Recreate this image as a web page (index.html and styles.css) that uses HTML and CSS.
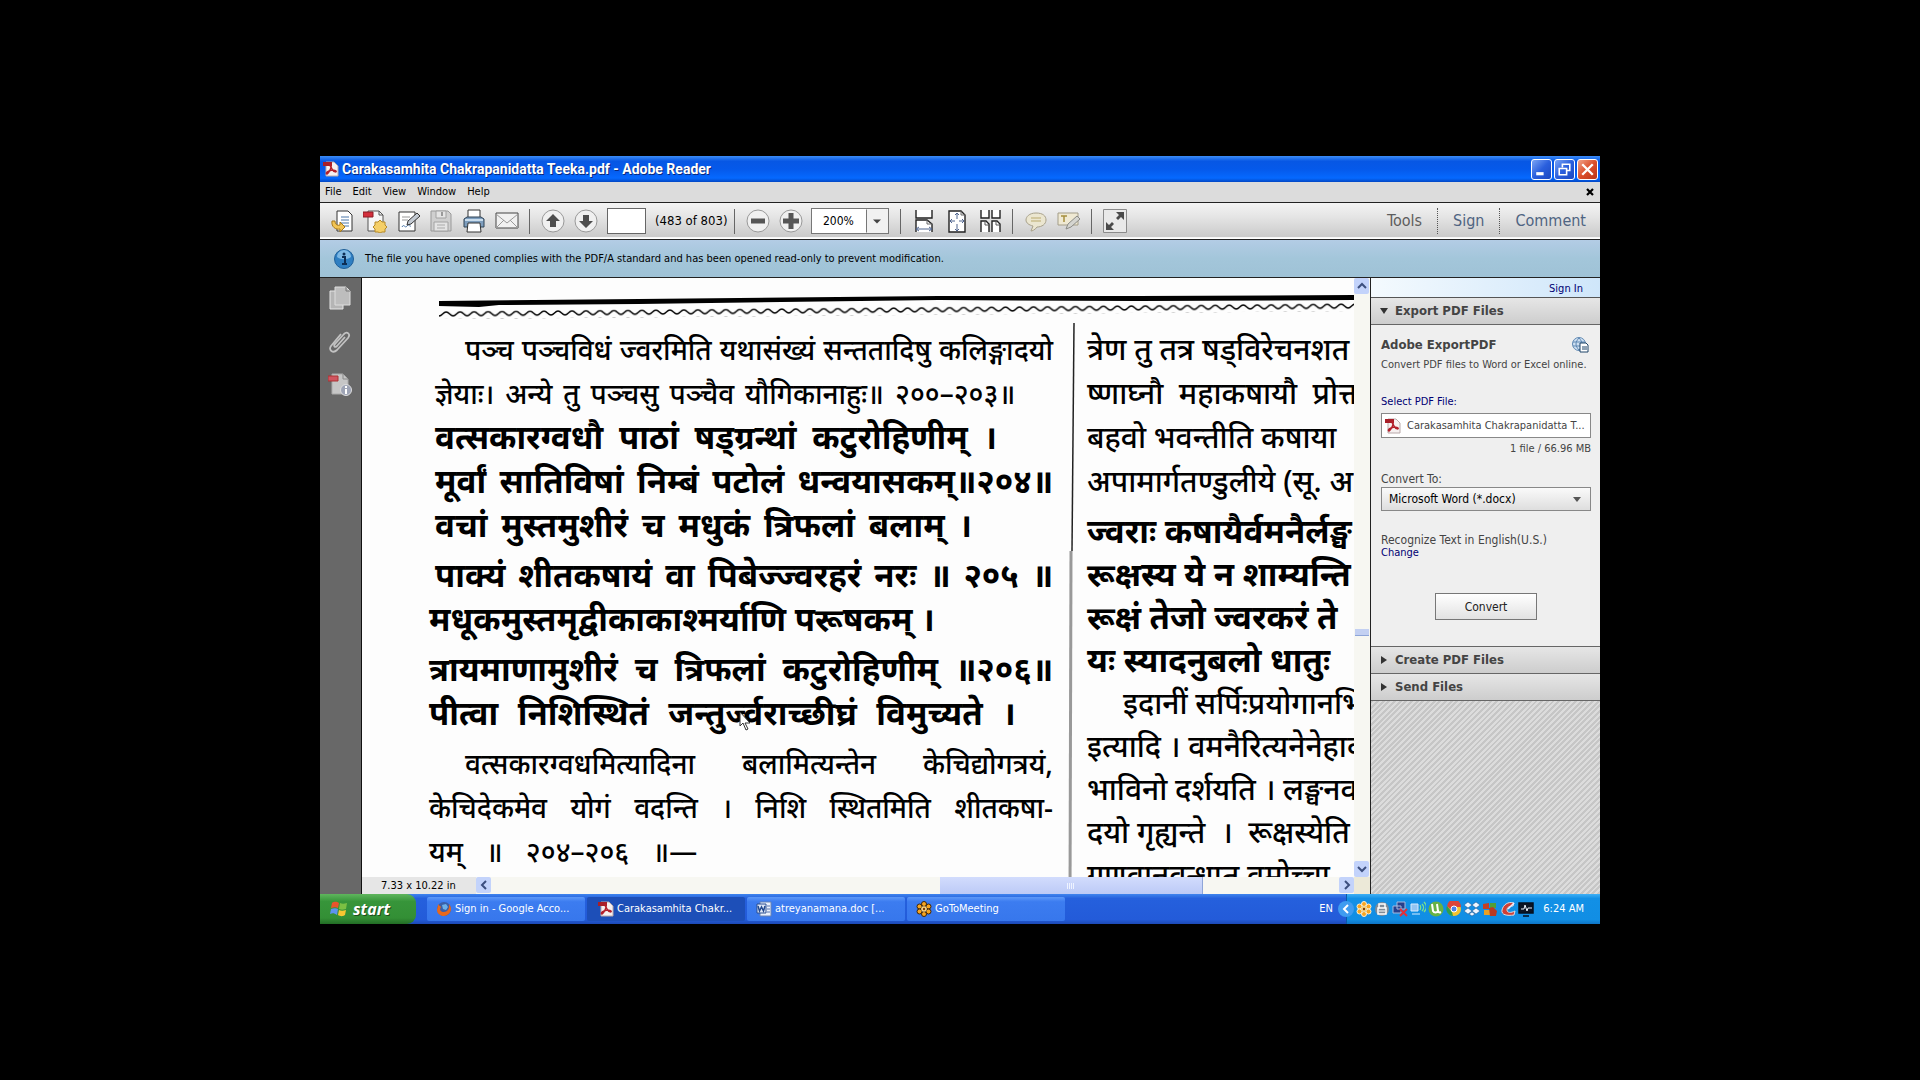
FILE: index.html
```html
<!DOCTYPE html>
<html lang="en">
<head>
<meta charset="utf-8">
<title>Carakasamhita Chakrapanidatta Teeka.pdf - Adobe Reader</title>
<link rel="stylesheet" href="styles.css">
</head>
<body>
<svg class="defs" aria-hidden="true">
  <symbol id="pdf" viewBox="0 0 16 16">
    <path d="M3 1h8l4 4v10H3z" fill="#f6f0f0" stroke="#b9a9aa"/>
    <path d="M0 1h9v4H0z" fill="#a81f29"/>
    <path d="M7 3c2 1 1 4 0 6s-2 4-3 4-1-2 2-3 6-1 7 0-2 2-4-2S6 4 7 3z" fill="none" stroke="#b3202b" stroke-width="1.5"/>
  </symbol>
  <symbol id="flower" viewBox="0 0 16 16">
    <g fill="#f8a51f" stroke="var(--edge)" stroke-width="1">
      <circle cx="8" cy="3" r="2.5"/><circle cx="8" cy="13" r="2.5"/>
      <circle cx="3.5" cy="5.5" r="2.5"/><circle cx="12.5" cy="5.5" r="2.5"/>
      <circle cx="3.5" cy="10.5" r="2.5"/><circle cx="12.5" cy="10.5" r="2.5"/>
    </g>
    <circle cx="8" cy="8" r="2.8" fill="#fbd27c"/><circle cx="8" cy="8" r="1.2" fill="#7a3d08"/>
  </symbol>
</svg>

<div class="screen">
  <header class="titlebar">
    <svg class="i16"><use href="#pdf"/></svg>
    <h1>Carakasamhita Chakrapanidatta Teeka.pdf - Adobe Reader</h1>
    <div class="winbtns">
      <button aria-label="Minimize"><svg viewBox="0 0 18 18"><path d="M4 13h7" stroke="#fff" stroke-width="3"/></svg></button>
      <button aria-label="Restore"><svg viewBox="0 0 18 18"><path d="M7 7V4h7v6h-3" fill="none" stroke="#fff" stroke-width="1.5"/><path d="M4 8h7v6H4z" fill="none" stroke="#fff" stroke-width="1.5"/></svg></button>
      <button class="close" aria-label="Close"><svg viewBox="0 0 18 18"><path d="M4 4l10 10M14 4L4 14" stroke="#fff" stroke-width="2.2"/></svg></button>
    </div>
  </header>

  <nav class="menubar">
    <button>File</button><button>Edit</button><button>View</button><button>Window</button><button>Help</button>
    <button class="docclose" aria-label="Close document"><svg viewBox="0 0 8 8"><path d="M1 1l6 6M7 1L1 7" stroke="#000" stroke-width="2.2"/></svg></button>
  </nav>

  <div class="toolbar">
    <div class="group">
      <button aria-label="Open"><svg viewBox="0 0 24 24"><path d="M7 2h11l4 4v16H7z" fill="#fff" stroke="#333"/><path d="M11 8h8M11 11h8M11 14h8M13 17h6" stroke="#4b76a8"/><path d="M2 12c-1 6 4 9 8 8v3l5-5-5-5v3c-3 1-5-1-5-4z" fill="#f3c555" stroke="#a87918"/></svg></button>
      <button aria-label="Create PDF"><svg viewBox="0 0 24 24"><path d="M5 2h11l4 4v16H5z" fill="#f6f6f6" stroke="#555"/><path d="M16 2v4h4" fill="none" stroke="#555"/><path d="M0 3h10v5H0z" fill="#d32f3c" stroke="#8a1c25"/><path d="M17 11l2 2 3 0 0 3 2 2-2 2 0 3-3 0-2 1-2-1-3 0 0-3-2-2 2-2 0-3 3 0z" fill="#f5cf68" stroke="#b58a28"/></svg></button>
      <button aria-label="Sign document"><svg viewBox="0 0 24 24"><path d="M3 3h16v19H3z" fill="#fff" stroke="#333"/><path d="M6 8h8M6 11h6" stroke="#999"/><path d="M6 18c2-4 3 2 5-1s2 1 4 0" fill="none" stroke="#4b76a8"/><path d="M11 16l1-4 9-8 3 3-9 8z" fill="#c3cad3" stroke="#333"/></svg></button>
      <button aria-label="Save"><svg viewBox="0 0 24 24"><path d="M2 2h17l3 3v17H2z" fill="#cfcfcf" stroke="#999"/><path d="M7 2h10v7H7zM5 13h14v9H5z" fill="#e4e4e4" stroke="#a2a2a2"/><path d="M8 16h8M8 19h8" stroke="#aaa"/><path d="M13 3v4" stroke="#999" stroke-width="2"/></svg></button>
      <button aria-label="Print"><svg viewBox="0 0 24 24"><path d="M6 1h12v9H6z" fill="#fff" stroke="#333"/><path d="M2 10l3-2h14l3 2v8H2z" fill="#7d9dbd" stroke="#2f4254"/><path d="M3 11h18" stroke="#c9dcec" stroke-width="2"/><path d="M6 14h12l1 9H5z" fill="#fff" stroke="#333"/></svg></button>
      <button aria-label="Email"><svg viewBox="0 0 24 24"><path d="M1 4h22v15H1z" fill="#f1f1f1" stroke="#444"/><path d="M1 5l11 9 11-9M1 19l8-8M23 19l-8-8" fill="none" stroke="#999"/></svg></button>
    </div>
    <span class="sep"></span>
    <div class="group">
      <button aria-label="Previous page"><svg viewBox="0 0 24 24"><circle cx="12" cy="12" r="11" fill="#f0f0f0" stroke="#999"/><path d="M12 5l7 7h-4v6H9v-6H5z" fill="#4d4d4d"/></svg></button>
      <button aria-label="Next page"><svg viewBox="0 0 24 24"><circle cx="12" cy="12" r="11" fill="#f0f0f0" stroke="#999"/><path d="M12 19l7-7h-4V6H9v6H5z" fill="#4d4d4d"/></svg></button>
    </div>
    <input class="pageno" type="text" aria-label="Page number">
    <span class="count">(483 of 803)</span>
    <span class="sep"></span>
    <div class="group">
      <button aria-label="Zoom out"><svg viewBox="0 0 24 24"><circle cx="12" cy="12" r="11" fill="#f0f0f0" stroke="#999"/><path d="M5 12h14" stroke="#555" stroke-width="5"/></svg></button>
      <button aria-label="Zoom in"><svg viewBox="0 0 24 24"><circle cx="12" cy="12" r="11" fill="#f0f0f0" stroke="#999"/><path d="M4 12h16M12 4v16" stroke="#555" stroke-width="5"/></svg></button>
    </div>
    <div class="zoom">
      <select aria-label="Zoom level"><option>200%</option></select>
      <svg viewBox="0 0 22 23"><path d="M.5 0v23" stroke="#777"/><path d="M7 10h8l-4 4z" fill="#444"/></svg>
    </div>
    <span class="sep"></span>
    <div class="group">
      <button aria-label="Fit width"><svg viewBox="0 0 24 24"><path d="M4 1v8h16V1M4 23V11h11l5 4v8" fill="#fff" stroke="#222" stroke-width="1.4"/><path d="M15 11v4h5" fill="none" stroke="#666"/><path d="M4 20h16M7 18l-3 2 3 2M17 18l3 2-3 2" fill="none" stroke="#4f648e"/></svg></button>
      <button aria-label="Fit page"><svg viewBox="0 0 24 24"><path d="M4 2h12l4 4v17H4z" fill="#fff" stroke="#222" stroke-width="1.4"/><path d="M16 2v4h4" fill="none" stroke="#666"/><path d="M12 4v6M12 15v7M5 12h5M14 12h5M10 6l2-2 2 2M10 20l2 2 2-2M7 10l-2 2 2 2M17 10l2 2-2 2" fill="none" stroke="#4f648e"/></svg></button>
      <button aria-label="Two pages"><svg viewBox="0 0 24 24"><path d="M3 1v8h8V1M14 1v8h8V1M3 23V12h5l3 3v8M14 23V12h5l3 3v8" fill="#fff" stroke="#222" stroke-width="1.4"/><path d="M7 12v4h4M18 12v4h4" fill="none" stroke="#555"/></svg></button>
    </div>
    <span class="sep"></span>
    <div class="group">
      <button aria-label="Add comment"><svg viewBox="0 0 24 24"><path d="M12 4c7 0 10 3 10 7s-4 7-9 7c-2 3-5 4-6 4l2-5c-4-1-7-3-7-6s3-7 10-7z" fill="#ebe6d0" stroke="#a8a18a"/><path d="M7 9h10M7 12h10" stroke="#b9a96c"/></svg></button>
      <button aria-label="Highlight text"><svg viewBox="0 0 24 24"><path d="M1 4h20v12H1z" fill="#efe9d3" stroke="#a39d88"/><path d="M4 7h6M7 7v6" stroke="#a68f3e" stroke-width="1.5"/><path d="M9 20l2-5 9-8 3 3-9 8z" fill="#d5d5d0" stroke="#8b8b86"/></svg></button>
    </div>
    <span class="sep"></span>
    <div class="group">
      <button aria-label="Read mode"><svg viewBox="0 0 24 24"><path d="M.5.5h23v23H.5z" fill="#e9e9e9" stroke="#8b8b8b"/><path d="M21 3v8l-3-3-3 3-2-2 3-3-3-3zM3 21v-8l3 3 3-3 2 2-3 3 3 3z" fill="#4a4a4a"/></svg></button>
    </div>
    <div class="modes">
      <button class="on">Tools</button><button>Sign</button><button>Comment</button>
    </div>
  </div>

  <div class="notice">
    <svg viewBox="0 0 20 20"><circle cx="10" cy="10" r="9.5" fill="#2f7fc2" stroke="#1f5f99"/><path d="M3 8a7 7 0 0 1 14 0c-4 3-10 3-14 0z" fill="#7db8e4"/><path d="M8 8h3v7M8 15h5" fill="none" stroke="#0d2e55" stroke-width="2"/><circle cx="10" cy="5" r="1.5" fill="#0d2e55"/></svg>
    <p>The file you have opened complies with the PDF/A standard and has been opened read-only to prevent modification.</p>
  </div>

  <main class="work">
    <nav class="rail">
      <button aria-label="Page thumbnails"><svg viewBox="0 0 24 24"><path d="M2 5h13v18H2z" fill="#b5b5b5" stroke="#e6e6e6"/><path d="M7 1h11l4 4v14H7z" fill="#bdbdbd" stroke="#ddd"/><path d="M18 1v4h4" fill="none" stroke="#777"/></svg></button>
      <button aria-label="Attachments"><svg viewBox="0 0 24 24"><path d="M17 8l-8 9c-2 2-4 0-2-2l9-10c3-3 7 0 4 4L9 21c-4 4-9 0-6-4L13 5" fill="none" stroke="#c2c2c2" stroke-width="1.8"/></svg></button>
      <button aria-label="Standards"><svg viewBox="0 0 24 24"><path d="M4 2h11l5 5v15H4z" fill="#c6c6c6" stroke="#aaa"/><path d="M15 2v5h5" fill="none" stroke="#888"/><path d="M0 4h10v5H0z" fill="#cf5560" stroke="#a33"/><circle cx="18" cy="18" r="5.5" fill="#9ea4b5" stroke="#dcdcdc"/><path d="M18 17v5M18 14v2" stroke="#fff" stroke-width="2"/></svg></button>
    </nav>

    <section class="viewer">
      <div class="page" lang="sa">
        <svg class="headrule" viewBox="0 0 916 28" preserveAspectRatio="none" aria-hidden="true">
          <defs><pattern id="wave" width="14" height="8" patternUnits="userSpaceOnUse" patternTransform="rotate(-.5)"><path d="M0 5c3 0 4-4 7-4s4 4 7 4" fill="none" stroke="#000" stroke-width="1.4"/></pattern></defs>
          <path d="M0 6L200 4 500 1 700 1 916 0v5L700 6 500 5 200 9 60 10 40 12 0 11z"/>
          <path d="M0 16L916 8V16L0 24z" fill="url(#wave)"/>
        </svg>
        <div class="cols">
          <div class="col left">
            <p class="indent">पञ्च पञ्चविधं ज्वरमिति यथासंख्यं सन्ततादिषु कलिङ्गादयो</p>
            <p class="w94">ज्ञेयाः। अन्ये तु पञ्चसु पञ्चैव यौगिकानाहुः॥ २००–२०३॥</p>
            <p class="verse w91">वत्सकारग्वधौ पाठां षड्ग्रन्थां कटुरोहिणीम् ।</p>
            <p class="verse">मूर्वां सातिविषां निम्बं पटोलं धन्वयासकम्॥२०४॥</p>
            <p class="verse w87">वचां मुस्तमुशीरं च मधुकं त्रिफलां बलाम् ।</p>
            <p class="verse gap">पाक्यं शीतकषायं वा पिबेज्ज्वरहरं नरः ॥ २०५ ॥</p>
            <p class="verse w81">मधूकमुस्तमृद्वीकाकाश्मर्याणि परूषकम् ।</p>
            <p class="verse gap">त्रायमाणामुशीरं च त्रिफलां कटुरोहिणीम् ॥२०६॥</p>
            <p class="verse w94">पीत्वा निशिस्थितं जन्तुर्ज्वराच्छीघ्रं विमुच्यते ।</p>
            <p class="indent gap">वत्सकारग्वधमित्यादिना बलामित्यन्तेन केचिद्योगत्रयं,</p>
            <p>केचिदेकमेव योगं वदन्ति । निशि स्थितमिति शीतकषा-</p>
            <p class="w43">यम् ॥ २०४–२०६ ॥—</p>
          </div>
          <svg class="gutter" viewBox="0 0 10 556" preserveAspectRatio="none" aria-hidden="true"><path d="M9 0L7 220" stroke="#222" stroke-width="1.5"/><path d="M6 220L5 556" stroke="#999" stroke-width="3"/></svg>
          <div class="col right">
            <p>त्रेण तु तत्र षड्विरेचनशत</p>
            <p>ष्णाघ्नौ &nbsp;महाकषायौ &nbsp;प्रोक्तौ</p>
            <p>बहवो भवन्तीति कषाया</p>
            <p>अपामार्गतण्डुलीये (सू. अ</p>
            <p class="verse gap">ज्वराः कषायैर्वमनैर्लङ्घ</p>
            <p class="verse">रूक्षस्य ये न शाम्यन्ति</p>
            <p class="verse">रूक्षं तेजो ज्वरकरं ते</p>
            <p class="verse">यः स्यादनुबलो धातुः</p>
            <p class="indent">इदानीं सर्पिःप्रयोगानभि</p>
            <p>इत्यादि । वमनैरित्यनेनेहाव</p>
            <p>भाविनो दर्शयति । लङ्घनव</p>
            <p>दयो गृह्यन्ते &nbsp;। &nbsp;रूक्षस्येति</p>
            <p>गुणवानवन्धात वमोच्चा</p>
          </div>
        </div>
        <svg class="cursor" viewBox="0 0 12 20" aria-hidden="true"><path d="M1 1v14l3-3 3 7 2-1-3-6h5z" fill="#fff" stroke="#333"/></svg>
      </div>
      <div class="vbar">
        <button aria-label="Scroll up"><svg viewBox="0 0 10 10"><path d="M1 7l4-4 4 4" /></svg></button>
        <div class="vtrack"><span></span></div>
        <button aria-label="Scroll down"><svg viewBox="0 0 10 10"><path d="M1 3l4 4 4-4"/></svg></button>
      </div>
      <div class="hbar">
        <span class="size">7.33 x 10.22 in</span>
        <button aria-label="Scroll left"><svg viewBox="0 0 10 10"><path d="M7 1L3 5l4 4"/></svg></button>
        <div class="htrack"><span><svg viewBox="0 0 8 6"><path d="M.5 0v6M2.500 0v6M4.500 0v6M6.500 0v6"/></svg></span></div>
        <button aria-label="Scroll right"><svg viewBox="0 0 10 10"><path d="M3 1l4 4-4 4"/></svg></button>
      </div>
      <div class="corner"></div>
    </section>

    <aside class="panel">
      <div class="signin"><a href="#">Sign In</a></div>
      <h2><button class="fold"><svg viewBox="0 0 8 8"><path d="M0 1h8L4 7z"/></svg>Export PDF Files</button></h2>
      <div class="export">
        <div class="product"><h3>Adobe ExportPDF</h3><svg viewBox="0 0 17 16"><circle cx="7" cy="7" r="6.5" fill="#cfe0f1" stroke="#5e87b2"/><path d="M1 5h12M1 9h12M7 1c-4 4-4 8 0 12M7 1c4 4 4 8 0 12" fill="none" stroke="#5e87b2"/><path d="M8 6h6l2 2v7H8z" fill="#fff" stroke="#1e4468"/><path d="M10 10h5M10 12h5" stroke="#1e4468"/></svg></div>
        <p class="hint">Convert PDF files to Word or Excel online.</p>
        <a class="pick" href="#">Select PDF File:</a>
        <div class="file"><svg class="i16"><use href="#pdf"/></svg><span>Carakasamhita Chakrapanidatta T...</span></div>
        <p class="total">1 file / 66.96 MB</p>
        <label for="fmt">Convert To:</label>
        <div class="format"><select id="fmt"><option>Microsoft Word (*.docx)</option></select><svg viewBox="0 0 8 5"><path d="M0 0h8L4 5z" fill="#555"/></svg></div>
        <p class="recog">Recognize Text in English(U.S.)</p>
        <a class="change" href="#">Change</a>
        <button class="convert">Convert</button>
      </div>
      <h2><button class="fold"><svg viewBox="0 0 8 8"><path d="M1 0l6 4-6 4z"/></svg>Create PDF Files</button></h2>
      <h2><button class="fold"><svg viewBox="0 0 8 8"><path d="M1 0l6 4-6 4z"/></svg>Send Files</button></h2>
      <div class="hatch"></div>
    </aside>
  </main>

  <footer class="taskbar">
    <button class="start"><svg viewBox="0 0 18 18"><path d="M2 3c3-2 5-1 7 0L8 8C6 7 4 7 1 8z" fill="#e8542c"/><path d="M10 3c2 1 4 1 7 0l-1 6c-3 1-5 1-7 0z" fill="#7cc043"/><path d="M1 9c3-1 5-1 7 0l-1 6c-3-2-4-2-7-1z" fill="#5d93ee"/><path d="M9 10c2 1 4 1 7 0l-1 5c-3 2-5 1-7 0z" fill="#f7c631"/></svg>start</button>
    <div class="tasks">
      <button><svg class="i16" viewBox="0 0 16 16"><circle cx="8" cy="8" r="7" fill="#3a5fa8"/><path d="M2 3c0 3-1 4-1 6 0 4 4 6 7 6s7-3 7-7c0-2-1-4-2-5 1 5-2 8-5 8s-5-2-3-5c0-1-2-1-3-3z" fill="#e8681c"/><path d="M6 4l4-1 2 3-2 3-3-1z" fill="#6db1e8"/></svg>Sign in - Google Acco...</button>
      <button class="active"><svg class="i16"><use href="#pdf"/></svg>Carakasamhita Chakr...</button>
      <button><svg class="i16" viewBox="0 0 16 16"><path d="M4 1h11v14H4z" fill="#e9f0fb" stroke="#6883b4"/><path d="M11 5h3M11 8h3M11 11h3" stroke="#5877b0"/><path d="M1 3h9v9H1z" fill="#e0e9f8" stroke="#2b4f92"/><path d="M2 5l1.500 5L5.500 6l2 4L9 5" fill="none" stroke="#234a8f" stroke-width="1.500"/></svg>atreyanamana.doc [...</button>
      <button><svg class="i16 dark"><use href="#flower"/></svg>GoToMeeting</button>
    </div>
    <span class="lang">EN</span>
    <div class="tray">
      <button class="expand" aria-label="Show hidden icons"><svg viewBox="0 0 10 10"><path d="M7 1L3 5l4 4" fill="none" stroke="#fff" stroke-width="2"/></svg></button>
      <div class="icons">
        <svg class="i16 light"><use href="#flower"/></svg>
        <svg class="i16" viewBox="0 0 16 16"><circle cx="8" cy="8" r="7" fill="#7f8b97"/><path d="M5 7V3h6v4M4 7h8v6H4z" fill="none" stroke="#fff" stroke-width="1.500"/><path d="M5 10h6" stroke="#fff"/></svg>
        <svg class="i16" viewBox="0 0 16 16"><path d="M5 1h8v7H5zM1 5h8v7H1z" fill="#27408c" stroke="#a9b8dc"/><path d="M8 8l7 7M15 8l-7 7" stroke="#e3303a" stroke-width="2"/></svg>
        <svg class="i16" viewBox="0 0 16 16"><path d="M1 3h7v7H1zM2 13h8" fill="#93c4f1" stroke="#d6ebff"/><path d="M10 4c1 2 1 3 0 5M12 3c2 2 2 5 0 7M14 1c3 3 3 7 0 10" fill="none" stroke="#7be08a" stroke-width="1.300"/></svg>
        <svg class="i16" viewBox="0 0 16 16"><circle cx="8" cy="8" r="7.500" fill="#66b245"/><path d="M4 3l1 7c1 2 4 2 5 0l-1-7M10 9c0 2 1 3 3 2" fill="none" stroke="#fff" stroke-width="2"/></svg>
        <svg class="i16" viewBox="0 0 16 16"><circle cx="8" cy="8" r="7" fill="#f4c430"/><path d="M1 5a7 7 0 0 1 14 1H8L5 9z" fill="#dc4437"/><path d="M1 5l5 6 1 4a7 7 0 0 1-6-10z" fill="#2c9e50"/><circle cx="8" cy="8" r="3" fill="#4a82e8" stroke="#fff"/></svg>
        <svg class="i16" viewBox="0 0 16 16"><path d="M4 1l4 3-4 3-4-3zM12 1l4 3-4 3-4-3zM4 7l4 3-4 3-4-3zM12 7l4 3-4 3-4-3zM5 13l3-2 3 2-3 2z" fill="#eef6ff" stroke="#1c4f86" stroke-width=".5"/></svg>
        <svg class="i16" viewBox="0 0 16 16"><path d="M1 3l6-1v6H1z" fill="#c33f26"/><path d="M8 2h6v5H8z" fill="#4f9f39"/><path d="M2 9h6v5H2z" fill="#e9a122"/><path d="M7 7l4-1 4 4-1 5H8z" fill="#ba3a22"/></svg>
        <svg class="i16" viewBox="0 0 16 16"><path d="M14 2C8 0 3 4 2 9s5 6 12 5l1-4c-4 2-8 2-8-1s3-4 6-4z" fill="#cf4036" stroke="#d8dce3"/><path d="M8 8l6-6" stroke="#eef" stroke-width="1.500"/></svg>
        <svg class="i16" viewBox="0 0 16 16"><path d="M1 2h14v10H1zM5 15h6" fill="#0b1524" stroke="#06101e" stroke-width="1.500"/><path d="M3 8h3l1-4 2 6 1-3h4" fill="none" stroke="#e8f0f8"/></svg>
      </div>
      <time>6:24 AM</time>
    </div>
  </footer>
</div>
</body>
</html>
```
FILE: styles.css
```css
* { box-sizing: border-box; margin: 0; }
:root { --ui: "DejaVu Sans Condensed", "DejaVu Sans", sans-serif; }
body { background: #000; font: 11px/14px var(--ui); color: #000; }
button, input, select { font: inherit; color: inherit; border: 0; border-radius: 0; background: none; padding: 0; }
svg { display: block; flex: none; }
a { color: #000073; text-decoration: none; }
.defs { position: absolute; width: 0; height: 0; }
.i16 { width: 16px; height: 16px; }
.dark { --edge: #3d2408; }
.light { --edge: #fff0d0; }

.screen { display: flex; flex-direction: column; height: 100vh; padding: 156px 320px; }

.titlebar { display: flex; align-items: center; gap: 3px; height: 26px; flex: none; padding: 0 2px 0 3px; background: linear-gradient(#3c8cf7, #0757e4 20%, #0559ea 50%, #0569ff 85%, #0347c4); color: #fff; }
.titlebar h1 { font: bold 14px/16px Roboto, sans-serif; text-shadow: 1px 1px #0a2a7d; white-space: nowrap; }
.winbtns { display: flex; gap: 2px; margin-left: auto; }
.winbtns button { width: 21px; height: 21px; border: 1px solid #fff; border-radius: 3px; background: linear-gradient(135deg, #7ba5f5, #2a5fdd 50%, #1c48c0); }
.winbtns .close { background: linear-gradient(135deg, #f0a38a, #dc4f2b 50%, #b9351a); }

.menubar { display: flex; align-items: center; gap: 11px; height: 20px; flex: none; padding: 0 6px 0 5px; background: #dcdcdc; }
.docclose { margin-left: auto; width: 8px; height: 8px; }

.toolbar { display: flex; align-items: center; height: 38px; flex: none; padding: 0 5px; border: 1px solid #222; border-width: 1px 0; background: linear-gradient(#f4f4f4, #e4e4e4 40%, #cacaca 95%, #fff 96%); }
.group { display: flex; }
.group button { width: 33px; height: 24px; display: grid; place-items: center; }
.group svg { width: 24px; height: 24px; }
.sep { width: 1px; height: 25px; margin: 0 6px; background: #666; flex: none; }
.pageno { width: 39px; height: 26px; margin: 0 9px 0 5px; border: 1px solid #666; background: #fff; padding: 0 4px; }
.count { font-size: 13px; width: 73px; white-space: nowrap; }
.zoom { position: relative; width: 78px; height: 26px; margin: 0 5px 0 4px; border: 1px solid #777; background: #fff; }
.zoom select { appearance: none; width: 100%; height: 100%; padding-left: 11px; font-size: 12px; }
.zoom svg { position: absolute; right: 0; top: 0; width: 22px; height: 100%; background: #f1f1f1; pointer-events: none; }
.modes { display: flex; margin-left: auto; font-size: 16px; line-height: 26px; color: #4f6482; }
.modes button { padding: 0 15px; border-left: 1px dotted #555; }
.modes button:last-child { padding-right: 9px; }
.modes .on { border: 0; color: #5d5d5d; }

.notice { display: flex; align-items: center; gap: 11px; height: 38px; flex: none; padding-left: 14px; border-bottom: 1px solid #222; background: linear-gradient(#b3cce5, #a3c6da 50%, #9fc2d6); white-space: nowrap; }
.notice svg { width: 20px; height: 20px; }

.work { display: flex; flex: 1; min-height: 0; }
.rail { display: flex; flex-direction: column; align-items: center; gap: 19px; width: 42px; flex: none; padding: 8px 2px 0 0; background: #686868; border-right: 1px solid #111; }
.rail svg { width: 24px; height: 24px; }

.viewer { flex: 1; min-width: 0; display: grid; grid-template: minmax(0, 1fr) 17px / minmax(0, 1fr) 16px; background: #fff; }
.page { position: relative; overflow: hidden; background: #fdfdfd; padding: 17px 0 0 67px; font-family: "Noto Sans", sans-serif; }
.headrule { width: calc(100% - 10px); height: 28px; margin-left: 10px; }
.cols { display: flex; }
.col { white-space: nowrap; padding-top: 4px; }
.left { width: 624px; flex: none; }
.right { width: 266px; flex: none; margin-left: 12px; }
.col p { font-size: 28px; line-height: 44px; font-weight: 500; }
.left p { text-align-last: justify; }
.left p:nth-child(-n+6) { padding-left: 6px; }
.right p { font-size: 30px; }
.right p:nth-child(n+5) { line-height: 43px; }
.col .verse { font-weight: bold; font-size: 33px; }
.col p.indent, .left p.indent:first-child { padding-left: 36px; }
.col .gap { margin-top: 6px; }
.w94 { width: 94%; }
.w91 { width: 91%; }
.w87 { width: 87%; }
.w81 { width: 81%; }
.w43 { width: 43%; }
.gutter { width: 10px; height: 576px; margin-left: 12px; }
.cursor { position: absolute; left: 377px; top: 433px; width: 12px; height: 20px; }

.vbar, .hbar { display: flex; background: #f7f7f2; }
.vbar { flex-direction: column; }
.vbar button, .hbar button { width: 15px; height: 16px; border-radius: 2px; background: #c3d3fb; display: grid; place-items: center; flex: none; }
.vbar svg, .hbar svg { width: 10px; height: 10px; fill: none; stroke: #3c4f7e; stroke-width: 2; }
.vtrack { flex: 1; padding: 335px 1px 0; }
.vtrack span { display: block; height: 7px; background: #c3d0f2; border-bottom: 1px solid #8ea5d8; }
.size { width: 114px; padding-left: 19px; line-height: 17px; background: #e6e6e6; }
.htrack { flex: 1; display: flex; }
.htrack span { display: grid; place-items: center; width: 31%; margin-left: 53%; background: linear-gradient(#d2dcfd, #bccaf6); border-right: 1px solid #8ea5d8; }
.htrack svg { width: 8px; height: 6px; stroke: #eef3ff; stroke-width: 1; }
.corner { background: #ece9d8; }

.panel { width: 230px; flex: none; display: flex; flex-direction: column; border-left: 1px solid #222; background: #efefef; color: #444; }
.signin { height: 20px; padding: 4px 17px 0; line-height: 14px; text-align: right; border-bottom: 1px solid #555; background: linear-gradient(90deg, #f4fafe, #cfe6fa); }
.panel h2 { font-size: 13px; line-height: 16px; }
.fold { display: flex; align-items: center; gap: 7px; width: 100%; height: 27px; padding-left: 9px; border-bottom: 1px solid #666; background: linear-gradient(#e6e6e6, #cdcdcd); font-weight: bold; color: #444; }
.fold svg { width: 8px; height: 8px; fill: #333; }
.export { display: flex; flex-direction: column; align-items: flex-start; height: 322px; padding: 12px 9px 0 10px; border-bottom: 1px solid #666; }
.product { display: flex; justify-content: space-between; align-items: center; width: 100%; padding-right: 2px; }
.product h3 { font-size: 13px; line-height: 16px; }
.product svg { width: 17px; height: 16px; }
.hint { margin-top: 5px; white-space: nowrap; }
.pick { margin-top: 23px; }
.file { display: flex; align-items: center; gap: 6px; width: 100%; height: 25px; margin-top: 4px; padding-left: 3px; border: 1px solid #888; background: #fff; white-space: nowrap; }
.total { align-self: flex-end; margin-top: 4px; }
.export label { margin-top: 16px; font-size: 12px; }
.format { position: relative; width: 100%; height: 24px; margin-top: 1px; border: 1px solid #888; background: linear-gradient(#fafafa, #dedede); }
.format select { appearance: none; width: 100%; height: 100%; padding-left: 7px; font-size: 12px; color: #000; }
.format svg { position: absolute; right: 9px; top: 9px; width: 8px; height: 5px; pointer-events: none; }
.recog { margin-top: 22px; font-size: 12px; }
.change { line-height: 12px; }
.convert { align-self: center; width: 102px; height: 27px; margin-top: 34px; border: 1px solid #777; background: linear-gradient(#fff, #e2e2e2); font-size: 12px; color: #222; }
.hatch { flex: 1; background: repeating-linear-gradient(135deg, #c6c6c6 0 2px, #dcdcdc 2px 4px); }

.taskbar { display: flex; align-items: stretch; height: 30px; flex: none; background: linear-gradient(#3f85ee, #2560dd 15%, #235bd9 85%, #1c49b5); color: #fff; }
.start { display: flex; align-items: center; gap: 5px; width: 96px; padding-left: 10px; border-radius: 0 9px 9px 0; background: linear-gradient(#5fb55d, #37953a 25%, #338f35 80%, #226d25); font: italic bold 16px/18px "Open Sans", sans-serif; text-shadow: 1px 1px #1d4d1d; }
.start svg { width: 18px; height: 18px; }
.tasks { display: flex; gap: 2px; padding: 3px 0 3px 11px; }
.tasks button { display: flex; align-items: center; gap: 3px; width: 158px; padding-left: 9px; border-radius: 2px; background: linear-gradient(#5c98f8, #3c7cf0 20%, #3777ec); white-space: nowrap; }
.tasks .active { background: #1d4fb8; padding-left: 11px; }
.lang { margin-left: auto; padding-right: 13px; line-height: 30px; }
.tray { display: flex; align-items: center; width: 254px; background: linear-gradient(#3fb0f5, #1290e6 15%, #118ee4 85%, #0f74c4); border-left: 1px solid #0b5aa8; }
.expand { width: 16px; height: 16px; margin-left: -9px; border-radius: 8px; background: #3f9cf0; display: grid; place-items: center; }
.expand svg { width: 10px; height: 10px; }
.icons { display: flex; gap: 2px; padding-left: 2px; }
.tray time { margin-left: auto; padding-right: 16px; white-space: nowrap; }
```
